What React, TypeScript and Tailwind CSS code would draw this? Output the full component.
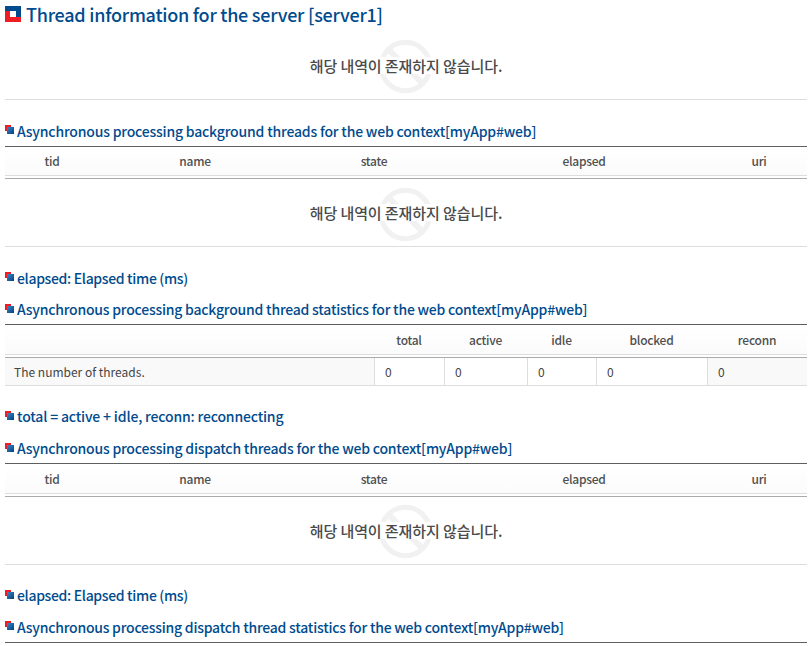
import type { ReactNode } from "react";

function Bullet() {
  return (
    <svg className="mt-[3px] mr-[3px] h-[9px] w-[9px] shrink-0" viewBox="0 0 9 9" shapeRendering="crispEdges">
      <defs>
        <linearGradient id="bullet-blue" x1="0" y1="0" x2="1" y2="1">
          <stop offset="0" stopColor="#3f88c5" />
          <stop offset="1" stopColor="#003f80" />
        </linearGradient>
      </defs>
      <path d="M0 0h6v2H2v4H0z" fill="#ee1c25" />
      <path d="M2 2h7v7H2z" fill="url(#bullet-blue)" />
    </svg>
  );
}

function Heading({ children, className = "", text = "-mt-px tracking-[-0.19px]" }: { children: ReactNode; className?: string; text?: string }) {
  return (
    <h2 className={"flex h-5 items-start text-[14px] leading-5 font-medium whitespace-nowrap text-[#004b8d] " + className}>
      <Bullet />
      <span className={text}>{children}</span>
    </h2>
  );
}

function Empty({ icon = "top-[7px]" }: { icon?: string }) {
  return (
    <div className="relative flex h-[68px] items-center justify-center border-b border-[#ddd]">
      <svg className={"absolute left-[373px] h-[55px] w-[55px] " + icon} viewBox="0 0 55 55" fill="none" stroke="#f1f1f1" strokeWidth="5">
        <circle cx="27.5" cy="27.5" r="24.2" />
        <path d="M10.5 10.5l34 34" strokeWidth="6" />
      </svg>
      <p className="relative h-[17px] bg-white text-[15px] leading-[17px] font-medium tracking-[-0.08px] whitespace-nowrap text-[#4a4a4a]">
        해당 내역이 존재하지 않습니다.
      </p>
    </div>
  );
}

function HeaderRow({ cols, size = "h-[30px] leading-7" }: { cols: [string, string][]; size?: string }) {
  return (
    <>
      <div className={"flex border-t border-b border-t-[#5e5f61] border-b-[#ddd] bg-linear-to-b from-white to-[#fbfbfb] text-[12px] font-medium tracking-[-0.25px] text-[#4f4f4f] " + size}>
        {cols.map(([label, width], i) => (
          <div key={i} className={"shrink-0 text-center " + width}>
            {label}
          </div>
        ))}
      </div>
      <div className="mt-[2px] h-px bg-[#aaa]" />
    </>
  );
}

const threadCols: [string, string][] = [
  ["tid", "w-[94px]"],
  ["name", "w-[192px]"],
  ["state", "w-[166px]"],
  ["elapsed", "w-[254px]"],
  ["uri", "w-[96px]"],
];

const statCols: [string, string][] = [
  ["", "w-[369px]"],
  ["total", "w-[70px]"],
  ["active", "w-[83px]"],
  ["idle", "w-[69px]"],
  ["blocked", "w-[111px]"],
  ["reconn", "w-[100px]"],
];

const counts = ["w-[70px]", "w-[83px]", "w-[69px]", "w-[111px]", "w-[100px] bg-[#f9f9f9]"];

export default function App() {
  return (
    <main className="h-[646px] w-[812px] overflow-hidden bg-white pr-[5px] pl-[5px] font-['Noto_Sans_CJK_KR',sans-serif]">
      <h1 className="flex h-8 items-start text-[18px] leading-7 font-medium whitespace-nowrap text-[#004b8d]">
        <svg className="mt-[6px] mr-[5px] h-4 w-4" viewBox="0 0 16 16" shapeRendering="crispEdges">
          <path d="M0 0h16v11h-5V5H0z" fill="#004b8d" />
          <path d="M0 5h5v6h11v5H0z" fill="#ee1c25" />
        </svg>
        <span className="tracking-[-0.25px]">Thread information for the server [server1]</span>
      </h1>
      <Empty />
      <Heading className="mt-[22px] mb-[4px]">Asynchronous processing background threads for the web context[myApp#web]</Heading>
      <HeaderRow cols={threadCols} />
      <Empty icon="top-[8px]" />
      <Heading className="mt-[22px]" text="-mt-px tracking-[-0.33px]">elapsed: Elapsed time (ms)</Heading>
      <Heading className="mt-[12px] mb-[3px]" text="-mt-[2px] tracking-[-0.22px]">Asynchronous processing background thread statistics for the web context[myApp#web]</Heading>
      <HeaderRow cols={statCols} size="h-[31px] leading-[30px]" />
      <div className="flex h-[28px] border-b border-[#ddd] text-[12px] leading-7 text-[#444]">
        <div className="w-[369px] bg-[#f9f9f9] pl-[9px]">The number of threads.</div>
        {counts.map((width) => (
          <div key={width} className={"border-l border-[#ddd] pl-[10px] " + width}>
            0
          </div>
        ))}
      </div>
      <Heading className="mt-[22px]" text="-mt-[2px] tracking-[-0.17px]">total = active + idle, reconn: reconnecting</Heading>
      <Heading className="mt-[12px] mb-[3px]" text="-mt-[2px] tracking-[-0.21px]">Asynchronous processing dispatch threads for the web context[myApp#web]</Heading>
      <HeaderRow cols={threadCols} size="h-[31px] leading-[30px]" />
      <Empty />
      <Heading className="mt-[22px]" text="-mt-[2px] tracking-[-0.33px]">elapsed: Elapsed time (ms)</Heading>
      <Heading className="mt-[11px] mb-[4px]" text="-mt-px tracking-[-0.23px]">Asynchronous processing dispatch thread statistics for the web context[myApp#web]</Heading>
      <div className="h-px bg-[#5e5f61]" />
    </main>
  );
}
